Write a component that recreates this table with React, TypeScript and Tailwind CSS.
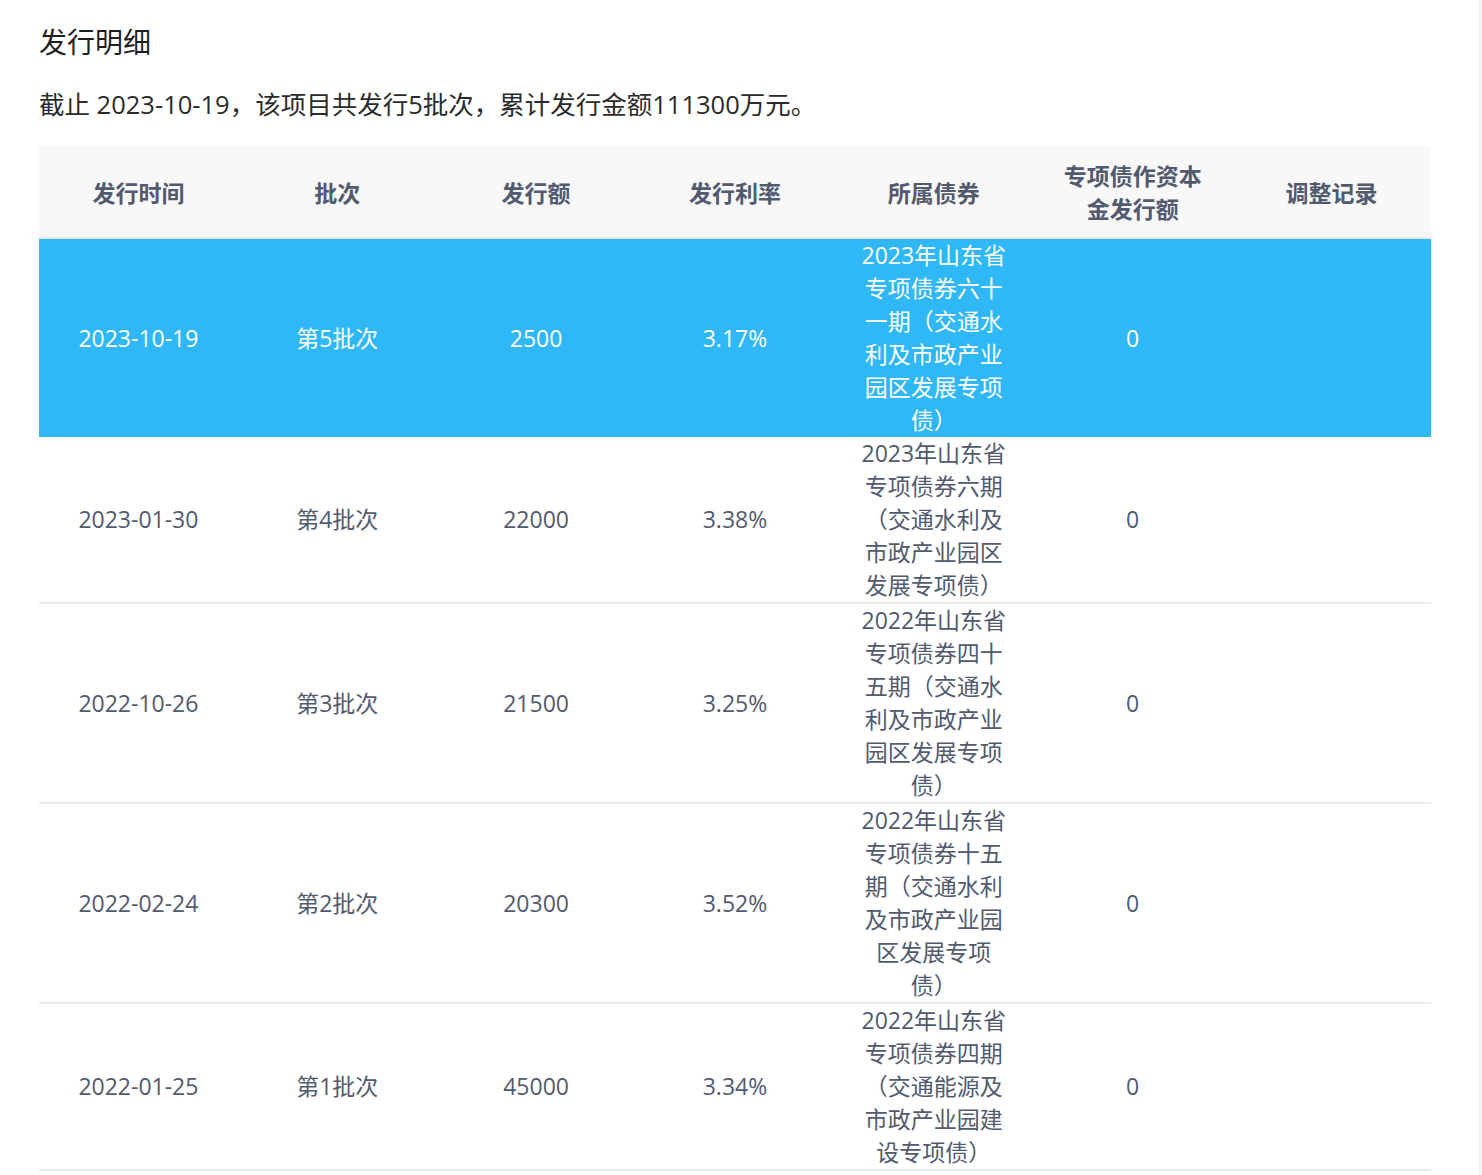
import React from 'react';

interface IssueRow {
  date: string;
  batch: string;
  amount: string;
  rate: string;
  bond: string;
  capital: string;
  record: string;
}

const ROWS: IssueRow[] = [
  {
    date: '2023-10-19',
    batch: '第5批次',
    amount: '2500',
    rate: '3.17%',
    bond: '2023年山东省专项债券六十一期（交通水利及市政产业园区发展专项债）',
    capital: '0',
    record: '',
  },
  {
    date: '2023-01-30',
    batch: '第4批次',
    amount: '22000',
    rate: '3.38%',
    bond: '2023年山东省专项债券六期（交通水利及市政产业园区发展专项债）',
    capital: '0',
    record: '',
  },
  {
    date: '2022-10-26',
    batch: '第3批次',
    amount: '21500',
    rate: '3.25%',
    bond: '2022年山东省专项债券四十五期（交通水利及市政产业园区发展专项债）',
    capital: '0',
    record: '',
  },
  {
    date: '2022-02-24',
    batch: '第2批次',
    amount: '20300',
    rate: '3.52%',
    bond: '2022年山东省专项债券十五期（交通水利及市政产业园区发展专项债）',
    capital: '0',
    record: '',
  },
  {
    date: '2022-01-25',
    batch: '第1批次',
    amount: '45000',
    rate: '3.34%',
    bond: '2022年山东省专项债券四期（交通能源及市政产业园建设专项债）',
    capital: '0',
    record: '',
  },
];

const HEADERS = ['发行时间', '批次', '发行额', '发行利率', '所属债券', '专项债作资本金发行额', '调整记录'];

export default function App() {
  const highlighted = 0;

  return (
    <div className="flex min-h-screen bg-white [font-family:'Open_Sans','Noto_Sans_CJK_SC',sans-serif]">
      <div className="w-[1479px] pl-[39px] pt-[22px]">
        <h2 className="text-[28px] leading-[40px] text-[#1f1f1f]">发行明细</h2>
        <p className="mt-[25px] text-[25.5px] leading-[35px] text-[#2b2b2b] [text-spacing-trim:space-all]">
          截止 2023-10-19，该项目共发行5批次，累计发行金额111300万元。
        </p>

        <table className="mt-[24px] w-[1392px] table-fixed border-collapse text-[23px] leading-[33px]">
          <thead>
            <tr className="bg-[#f8f8f9] border-b-2 border-[#e8eaec]">
              {HEADERS.map((h) => (
                <th
                  key={h}
                  className="h-[92px] px-[29px] pt-[3px] text-center align-middle font-bold text-[#515a6e]"
                >
                  {h}
                </th>
              ))}
            </tr>
          </thead>
          <tbody>
            {ROWS.map((r, i) => {
              const active = i === highlighted;
              const cells = [r.date, r.batch, r.amount, r.rate, r.bond, r.capital, r.record];
              return (
                <tr
                  key={r.date}
                  className={
                    active
                      ? 'bg-[#2fb8f5] text-white'
                      : 'bg-white text-[#515a6e] border-b-2 border-[#e8eaec]'
                  }
                >
                  {cells.map((c, j) => (
                    <td key={j} className="px-[26px] py-0 text-center align-middle">
                      {c}
                    </td>
                  ))}
                </tr>
              );
            })}
          </tbody>
        </table>
      </div>
      <div className="ml-auto w-[3px] bg-[#f4f5f9] border-l border-[#eceef3]" />
    </div>
  );
}
